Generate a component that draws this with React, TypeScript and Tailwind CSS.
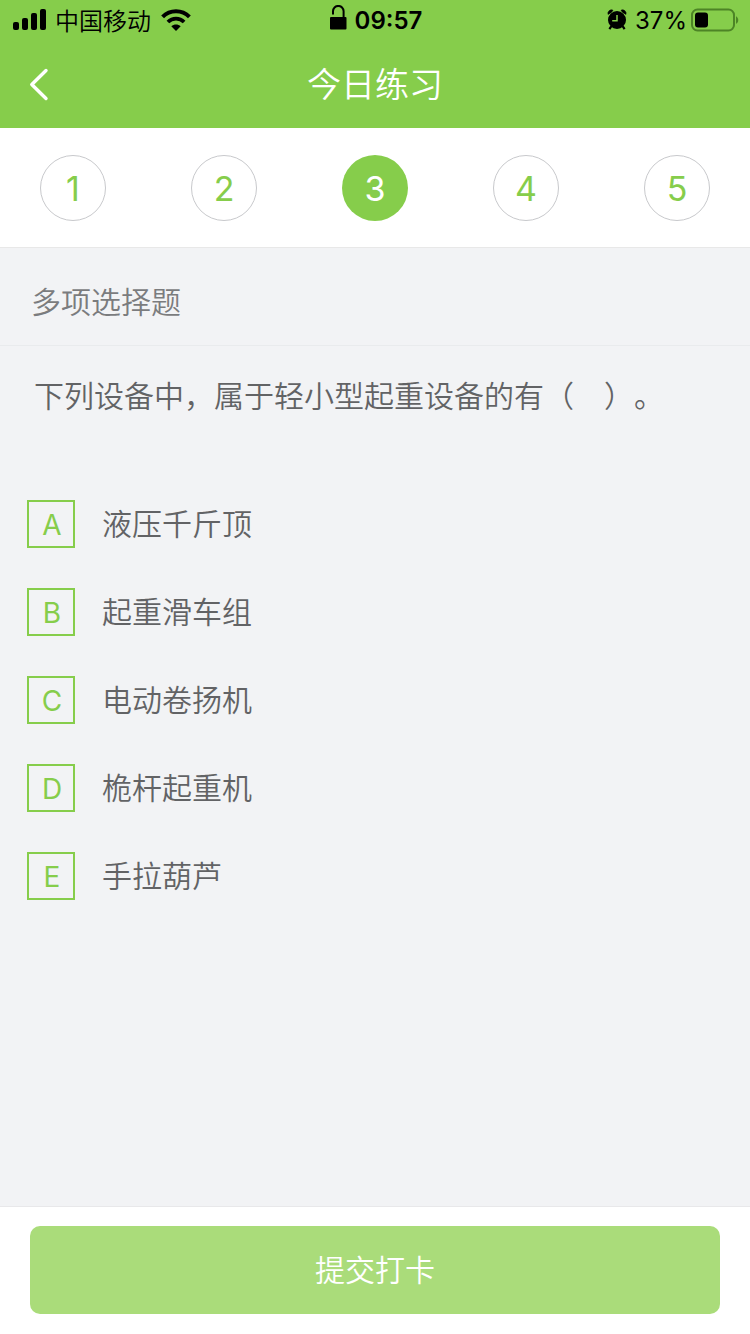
const steps = [1, 2, 3, 4, 5];
const currentStep = 3;

const options = [
  { key: "A", text: "液压千斤顶" },
  { key: "B", text: "起重滑车组" },
  { key: "C", text: "电动卷扬机" },
  { key: "D", text: "桅杆起重机" },
  { key: "E", text: "手拉葫芦" },
];

function SignalIcon() {
  return (
    <svg width="34" height="22" viewBox="0 0 34 22" aria-hidden="true">
      <rect x="0" y="13" width="6" height="8" rx="2" />
      <rect x="9" y="9" width="6" height="12" rx="2" />
      <rect x="18" y="4" width="6" height="17" rx="2" />
      <rect x="27" y="0" width="6" height="21" rx="2" />
    </svg>
  );
}

function WifiIcon() {
  return (
    <svg width="30" height="22" viewBox="0 0 30 22" fill="none" stroke="currentColor" aria-hidden="true">
      <path d="M1.6 7.8C9 .4 21 .4 28.4 7.8" strokeWidth="4" />
      <path d="M6.9 13C11.4 8.6 18.6 8.6 23.1 13" strokeWidth="3.8" />
      <path d="M10.3 17.3C13 14.8 17 14.8 19.7 17.3L15 22Z" fill="currentColor" stroke="none" />
    </svg>
  );
}

function UnlockIcon() {
  return (
    <svg width="17" height="25" viewBox="0 0 17 25" aria-hidden="true">
      <path d="M3 9.5V6.2a5.3 5.3 0 0 1 10.6 0V13" fill="none" stroke="currentColor" strokeWidth="2" />
      <rect x="0" y="12" width="16.5" height="12.5" rx="1" />
    </svg>
  );
}

function AlarmIcon() {
  return (
    <svg width="20" height="22" viewBox="0 0 20 22" fill="none" stroke="currentColor" aria-hidden="true">
      <circle cx="10" cy="11" r="9" fill="currentColor" stroke="none" />
      <path d="M1 5.4A3.6 3.6 0 0 1 6 1.2L4.4 3.4zM14 1.2a3.6 3.6 0 0 1 5 4.2L15.6 3.4z" fill="currentColor" strokeWidth="0.6" />
      <path d="M4.2 17.4 2.4 20.2M15.8 17.4l1.8 2.8" strokeWidth="2.2" />
      <path d="M10 6v5.8H5.2" className="stroke-[#86cd4b]" strokeWidth="1.5" />
    </svg>
  );
}

function BatteryIcon() {
  return (
    <svg width="48" height="24" viewBox="0 0 48 24" aria-hidden="true">
      <rect x="1" y="1.5" width="42" height="21" rx="5.5" fill="none" stroke="#4d8426" strokeWidth="2" />
      <rect x="4" y="4.5" width="13" height="15" rx="3" />
      <path d="M45 8.2c3 1.6 3 6 0 7.6z" fill="#4d8426" />
    </svg>
  );
}

export default function App() {
  return (
    <div className="flex min-h-screen flex-col bg-[#f2f3f5] font-['Inter','Noto_Sans_CJK_SC',sans-serif]" lang="zh-CN">
      <header className="bg-[#86cd4b]">
        <div className="grid h-10 grid-cols-[1fr_auto_1fr] items-center pr-[11px] pl-[13px] text-2xl text-black">
          <div className="flex items-center">
            <SignalIcon />
            <span className="ml-2 pt-1 font-[350]">中国移动</span>
            <span className="ml-2.5">
              <WifiIcon />
            </span>
          </div>
          <div className="flex items-center gap-2">
            <span className="pb-1.5">
              <UnlockIcon />
            </span>
            <span className="pt-0.5 font-semibold">09:57</span>
          </div>
          <div className="flex items-center justify-end">
            <AlarmIcon />
            <span className="ml-2 pt-0.5">37%</span>
            <span className="ml-1">
              <BatteryIcon />
            </span>
          </div>
        </div>
        <div className="grid h-22 grid-cols-[1fr_auto_1fr] items-center px-7 text-white">
          <button type="button" aria-label="返回" className="justify-self-start">
            <svg width="22" height="34" viewBox="0 0 22 34" fill="none" stroke="currentColor" strokeWidth="3.4" strokeLinecap="round" strokeLinejoin="round" aria-hidden="true">
              <path d="M18 3.5 3.8 17.5 18 31.5" />
            </svg>
          </button>
          <h1 className="pt-0.5 text-[34px] leading-[48px] font-[350]">今日练习</h1>
        </div>
      </header>

      <nav className="flex justify-between border-b border-[#e8e8e8] bg-white px-10 pt-[27px] pb-[26px]">
        {steps.map((n) => (
          <button
            key={n}
            type="button"
            aria-current={n === currentStep ? "step" : undefined}
            className={
              n === currentStep
                ? "flex size-[66px] items-center justify-center rounded-full bg-[#86cd4b] text-[34px] text-white"
                : "flex size-[66px] items-center justify-center rounded-full border border-[#c8c9cc] text-[34px] text-[#86cd4b]"
            }
          >
            {n}
          </button>
        ))}
      </nav>

      <main className="flex-1">
        <h2 className="border-b border-[#e9ebed] px-[31px] pt-8 pb-[21px] text-[30px] leading-[44px] font-[350] text-[#7b7c7e]">
          多项选择题
        </h2>
        <p className="px-[34px] pt-7 text-[30px] leading-[44px] font-[350] text-[#626365] [text-spacing-trim:space-all]">
          下列设备中，属于轻小型起重设备的有（　）。
        </p>
        <div className="mt-[82px] flex flex-col gap-10 px-[27px] pb-10">
          {options.map((o) => (
            <label key={o.key} className="flex cursor-pointer items-center gap-[27px] text-[30px] leading-[44px]">
              <input type="checkbox" name="answer" value={o.key} className="peer sr-only" />
              <span className="flex size-12 items-center justify-center border-2 border-[#86cd4b] pt-0.5 pl-0.5 text-[28px] text-[#86cd4b] peer-checked:bg-[#86cd4b] peer-checked:text-white">
                {o.key}
              </span>
              <span className="font-[350] text-[#626365]">{o.text}</span>
            </label>
          ))}
        </div>
      </main>

      <footer className="border-t border-[#e8e8ea] bg-white px-[30px] pt-[19px] pb-5">
        <button type="button" className="h-22 w-full rounded-[10px] bg-[#aadc7a] text-[30px] font-[350] text-white">
          提交打卡
        </button>
      </footer>
    </div>
  );
}
